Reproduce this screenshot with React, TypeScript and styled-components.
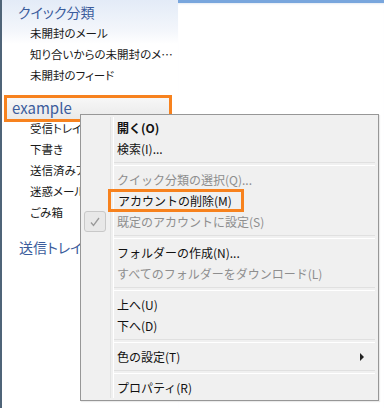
import React from "react";
import styled, { createGlobalStyle } from "styled-components";

const Global = createGlobalStyle`
  html, body { margin: 0; padding: 0; background: #fff; }
  body { font-family: "Noto Sans CJK JP", "Noto Sans", sans-serif; }
  * { box-sizing: border-box; }
`;

const Frame = styled.div`
  position: relative;
  width: 384px;
  height: 408px;
  display: flex;
  overflow: hidden;
  background: #fff;
`;

const Sidebar = styled.div`
  width: 178px;
  flex: none;
  border-left: 2px solid #4f6478;
  background: linear-gradient(#e3ebf7 0px, #f3f6fb 30px, #ffffff 44px);
  display: flex;
  flex-direction: column;
  padding-top: 2px;
`;

const Main = styled.div`
  flex: 1;
  border-top: 3px solid #79a6dd;
  box-shadow: inset 0 2px 2px -1px #e4ebf4;
`;

const SectionTitle = styled.div<{ $indent: number; $top?: number }>`
  height: 21px;
  line-height: 21px;
  padding-left: ${(p) => p.$indent}px;
  margin-top: ${(p) => p.$top ?? 0}px;
  font-size: 14px;
  color: #3b5c9c;
  font-feature-settings: "palt";
  white-space: nowrap;
`;

const Item = styled.div`
  height: 21px;
  line-height: 21px;
  padding-left: 28px;
  font-size: 11.5px;
  color: #1a1a1a;
  font-feature-settings: "palt";
  white-space: nowrap;
`;

const AccountRow = styled.div`
  margin: 9px 6px 0 2px;
  height: 27px;
  border: 3px solid #f7821e;
  background: linear-gradient(#f7f7f7, #e9e9e9);
  padding-left: 5px;
  line-height: 20px;
  font-size: 15px;
  color: #3b5c9c;
`;

const ItemList = styled.div`
  margin-top: -4px;
`;

const Menu = styled.div`
  position: absolute;
  left: 80px;
  top: 114px;
  width: 299px;
  border: 1px solid #979797;
  background: #f0f0f0;
  padding: 2px 2px;
  display: flex;
  flex-direction: column;
  box-shadow: 1px 1px 1px rgba(0,0,0,0.08);
  &::before {
    content: "";
    position: absolute;
    left: 29px;
    top: 2px;
    bottom: 2px;
    width: 2px;
    border-left: 1px solid #e2e3e3;
    border-right: 1px solid #ffffff;
  }
`;

const MenuItem = styled.div<{ $disabled?: boolean; $bold?: boolean }>`
  position: relative;
  height: 21px;
  line-height: 21px;
  padding-left: 34px;
  font-size: 12px;
  font-weight: ${(p) => (p.$bold ? 700 : 400)};
  color: ${(p) => (p.$disabled ? "#8e8e8e" : "#111")};
  white-space: nowrap;
  display: flex;
  align-items: center;
`;

const Highlight = styled.span`
  margin-left: -9px;
  padding: 0 9px 0 7px;
  height: 23px;
  line-height: 17px;
  border: 3px solid #f7821e;
`;

const Separator = styled.div`
  height: 10px;
  margin-left: 30px;
  margin-right: 1px;
  display: flex;
  align-items: center;
  &::after {
    content: "";
    flex: 1;
    height: 2px;
    border-top: 1px solid #e0e0e0;
    border-bottom: 1px solid #ffffff;
  }
`;

const CheckBox = styled.span`
  position: absolute;
  left: 1px;
  top: 0px;
  width: 22px;
  height: 21px;
  border: 1px solid #c8c8c8;
  border-radius: 3px;
  background: #e8e8e8;
  display: flex;
  align-items: center;
  justify-content: center;
`;

const SubArrow = styled.span`
  position: absolute;
  right: 12px;
  top: 7px;
  width: 0;
  height: 0;
  border-top: 4px solid transparent;
  border-bottom: 4px solid transparent;
  border-left: 4px solid #222;
`;

export default function App() {
  return (
    <Frame>
      <Global />
      <Sidebar>
        <SectionTitle $indent={16}>クイック分類</SectionTitle>
        <Item>未開封のメール</Item>
        <Item>知り合いからの未開封のメ…</Item>
        <Item>未開封のフィード</Item>
        <AccountRow>example</AccountRow>
        <ItemList>
          <Item>受信トレイ</Item>
          <Item>下書き</Item>
          <Item>送信済みアイテム</Item>
          <Item>迷惑メール</Item>
          <Item>ごみ箱</Item>
        </ItemList>
        <SectionTitle $indent={17} $top={14}>送信トレイ</SectionTitle>
      </Sidebar>
      <Main />
      <Menu>
        <MenuItem $bold>開く(O)</MenuItem>
        <MenuItem>検索(I)...</MenuItem>
        <Separator />
        <MenuItem $disabled>クイック分類の選択(Q)...</MenuItem>
        <MenuItem>
          <Highlight>アカウントの削除(M)</Highlight>
        </MenuItem>
        <MenuItem $disabled>
          <CheckBox>
            <svg width="12" height="12" viewBox="0 0 12 12">
              <path d="M2 6.5 L4.5 9.5 L10 2" fill="none" stroke="#9a9a9a" strokeWidth="1.3" />
            </svg>
          </CheckBox>
          既定のアカウントに設定(S)
        </MenuItem>
        <Separator />
        <MenuItem>フォルダーの作成(N)...</MenuItem>
        <MenuItem $disabled>すべてのフォルダーをダウンロード(L)</MenuItem>
        <Separator />
        <MenuItem>上へ(U)</MenuItem>
        <MenuItem>下へ(D)</MenuItem>
        <Separator />
        <MenuItem>
          色の設定(T)
          <SubArrow />
        </MenuItem>
        <Separator />
        <MenuItem>プロパティ(R)</MenuItem>
      </Menu>
    </Frame>
  );
}
